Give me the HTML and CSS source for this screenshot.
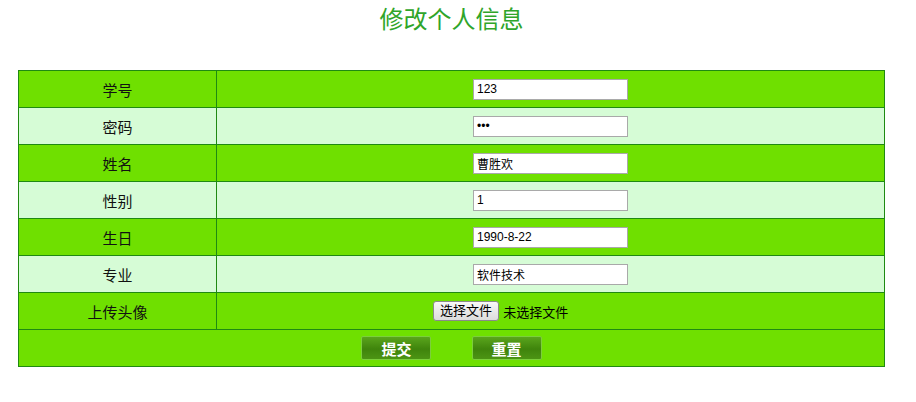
FILE: index.html
```html
<!DOCTYPE html>
<html>
<head>
  <meta charset="utf-8">
  <title>修改个人信息</title>
  <link rel="stylesheet" href="styles.css">
</head>

<body>
  <div class="wrap">
    <h1 class="title">修改个人信息</h1>

    <form>
      <table class="info-table">
        <tr class="dark">
          <td class="label">学号</td>
          <td><input type="text" class="field" value="123"></td>
        </tr>
        <tr class="light">
          <td class="label">密码</td>
          <td><input type="password" class="field" value="123"></td>
        </tr>
        <tr class="dark">
          <td class="label">姓名</td>
          <td><input type="text" class="field" value="曹胜欢"></td>
        </tr>
        <tr class="light">
          <td class="label">性别</td>
          <td><input type="text" class="field" value="1"></td>
        </tr>
        <tr class="dark">
          <td class="label">生日</td>
          <td><input type="text" class="field" value="1990-8-22"></td>
        </tr>
        <tr class="light">
          <td class="label">专业</td>
          <td><input type="text" class="field" value="软件技术"></td>
        </tr>
        <tr class="dark">
          <td class="label">上传头像</td>
          <td>
            <span class="file-pick">
              <span class="file-btn">选择文件</span>
              <span class="file-name">未选择文件</span>
            </span>
          </td>
        </tr>
        <tr class="dark">
          <td colspan="2" class="actions">
            <button type="submit" class="green-btn">提交</button>
            <button type="reset" class="green-btn">重置</button>
          </td>
        </tr>
      </table>
    </form>
  </div>
</body>
</html>
```

FILE: styles.css
```css
body {
  margin: 0;
  font-family: "Liberation Sans", "Noto Sans CJK SC", sans-serif;
  background-color: #fff;
}

.wrap {
  width: 867px;
  margin-left: 18px;
}

.title {
  margin: 0;
  padding-top: 5px;
  height: 70px;
  box-sizing: border-box;
  text-align: center;
  font-size: 24px;
  font-weight: normal;
  line-height: 30px;
  color: #2fa52a;
}

.info-table {
  width: 867px;
  border-collapse: collapse;
  table-layout: fixed;
}

.info-table td {
  height: 36px;
  padding: 0;
  border: 1px solid #1f8a12;
  text-align: center;
  font-size: 15px;
  color: #111;
}

.info-table td.label {
  width: 197px;
}

.dark td {
  background-color: #6fe000;
}

.light td {
  background-color: #d6fcd6;
}

.field {
  width: 155px;
  height: 21px;
  box-sizing: border-box;
  margin: 0;
  padding: 0 3px;
  border: 1px solid #a9a9a9;
  background-color: #fff;
  font-family: "Liberation Sans", "Noto Sans CJK SC", sans-serif;
  font-size: 12px;
  color: #000;
  vertical-align: middle;
}

.file-pick {
  display: inline-block;
  width: 235px;
  text-align: left;
  vertical-align: middle;
}

.file-btn {
  display: inline-block;
  width: 66px;
  height: 20px;
  line-height: 18px;
  box-sizing: border-box;
  border: 1px solid #8a8a8a;
  border-radius: 3px;
  background: linear-gradient(#f8f8f8, #dcdcdc);
  text-align: center;
  font-size: 13px;
  color: #000;
  vertical-align: middle;
}

.file-name {
  font-size: 13px;
  color: #000;
  vertical-align: middle;
}

.actions {
  padding-top: 1px;
}

.green-btn {
  width: 70px;
  height: 24px;
  margin: 0 18px;
  padding: 0;
  border: 1px solid #7ccf3c;
  border-radius: 2px;
  background: linear-gradient(#5aa51c, #3f840c 55%, #4c9414);
  color: #fff;
  font-family: "Liberation Sans", "Noto Sans CJK SC", sans-serif;
  font-size: 15px;
  font-weight: bold;
  cursor: pointer;
  vertical-align: middle;
}
```
